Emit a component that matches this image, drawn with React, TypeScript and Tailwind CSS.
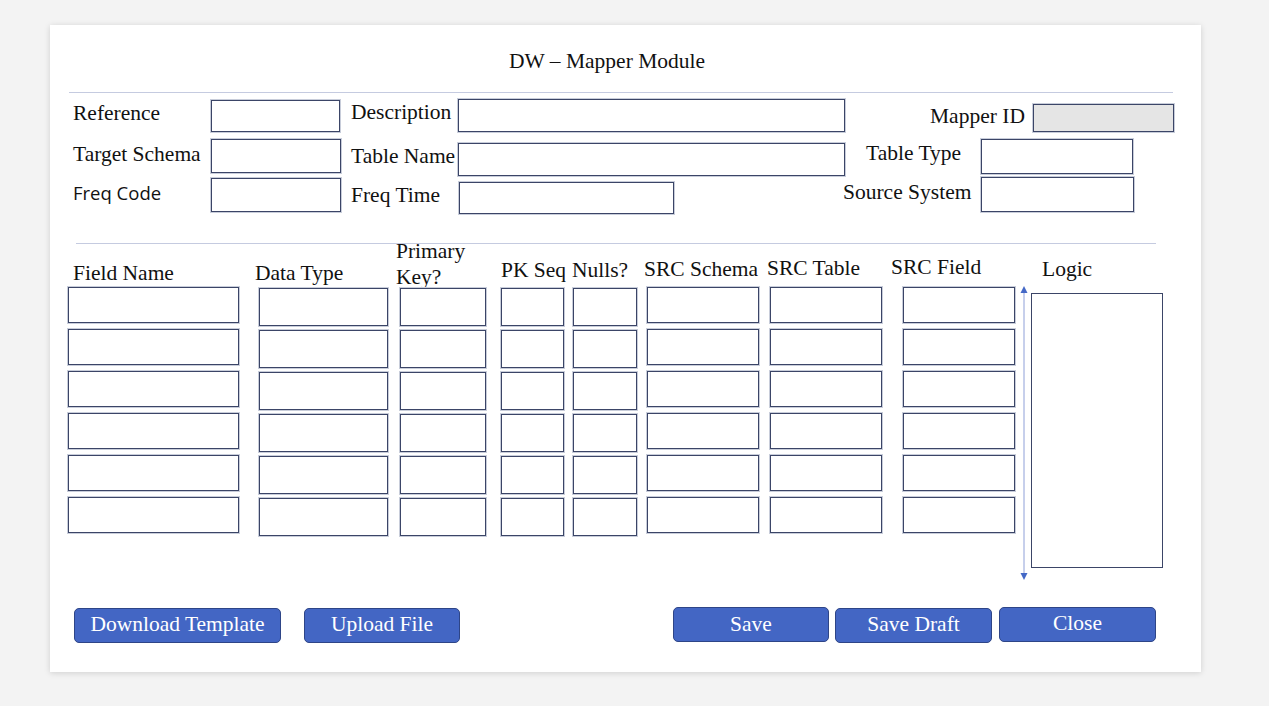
import React from "react";

type Col = {
  label: React.ReactNode;
  wrap: string;
  head: string;
  text: string;
  box: string;
  gap: string;
};

const fieldBox =
  "block bg-white border border-[#3b4567] shadow-[0_0_0_1px_#c8cdda] outline-none";

function Box({ className }: { className: string }) {
  return <input readOnly className={`${fieldBox} ${className}`} />;
}

const cols: Col[] = [
  { label: "Field Name", wrap: "ml-[18px] w-[171px]", head: "h-[43px]", text: "pt-[17px] pl-[5px]", box: "h-[36px]", gap: "gap-[6px]" },
  { label: "Data Type", wrap: "ml-[20px] w-[129px]", head: "h-[44px]", text: "pt-[17px] -ml-[4px]", box: "h-[38px]", gap: "gap-[4px]" },
  {
    label: (
      <>
        Primary
        <br />
        Key?
      </>
    ),
    wrap: "ml-[12px] w-[86px]",
    head: "h-[44px]",
    text: "-mt-[6px] -ml-[4px] leading-[26px]",
    box: "h-[38px]",
    gap: "gap-[4px]",
  },
  { label: "PK Seq", wrap: "ml-[15px] w-[63px]", head: "h-[44px]", text: "pt-[14px]", box: "h-[38px]", gap: "gap-[4px]" },
  { label: "Nulls?", wrap: "ml-[9px] w-[64px]", head: "h-[44px]", text: "pt-[14px] -ml-[1px]", box: "h-[38px]", gap: "gap-[4px]" },
  { label: "SRC Schema", wrap: "ml-[10px] w-[112px]", head: "h-[43px]", text: "pt-[13px] -ml-[3px]", box: "h-[36px]", gap: "gap-[6px]" },
  { label: "SRC Table", wrap: "ml-[11px] w-[112px]", head: "h-[43px]", text: "pt-[12px] -ml-[3px]", box: "h-[36px]", gap: "gap-[6px]" },
  { label: "SRC Field", wrap: "ml-[21px] w-[112px]", head: "h-[43px]", text: "pt-[11px] -ml-[12px]", box: "h-[36px]", gap: "gap-[6px]" },
];

const btn =
  "bg-[#4366c4] border border-[#2e4587] rounded-[5px] text-white text-[21.5px] leading-[24px]";

export default function App() {
  return (
    <div className="min-h-screen bg-[#f3f3f3] pt-[25px] font-['Liberation_Serif',serif] text-[#111]">
      <div className="ml-[50px] w-[1151px] h-[647px] bg-white shadow-[0_1px_6px_rgba(0,0,0,0.15)] flex flex-col">
        {/* title */}
        <div className="pt-[24px] pl-[459px] text-[21.5px] leading-[24px] whitespace-nowrap">
          DW – Mapper Module
        </div>
        <div className="mt-[19px] ml-[19px] w-[1104px] h-px bg-[#c5cbe0]" />

        {/* header fields */}
        <div className="text-[21.5px] leading-[24px] whitespace-nowrap">
          <div className="mt-[6px] h-[33px] pl-[23px] flex items-start">
            <div className="mt-[2px] w-[138px]">Reference</div>
            <Box className="mt-[1px] w-[129px] h-[32px]" />
            <div className="mt-[1px] ml-[11px] w-[107px]">Description</div>
            <Box className="w-[387px] h-[33px]" />
            <div className="mt-[5px] ml-[85px] w-[103px]">Mapper ID</div>
            <Box className="mt-[5px] w-[141px] h-[28px] !bg-[#e5e5e5]" />
          </div>
          <div className="mt-[7px] h-[37px] pl-[23px] flex items-start">
            <div className="mt-[3px] w-[138px]">Target Schema</div>
            <Box className="w-[130px] h-[34px]" />
            <div className="mt-[5px] ml-[10px] w-[107px]">Table Name</div>
            <Box className="mt-[4px] w-[387px] h-[33px]" />
            <div className="mt-[2px] ml-[21px] w-[115px]">Table Type</div>
            <Box className="w-[152px] h-[35px]" />
          </div>
          <div className="mt-[1px] h-[37px] pl-[23px] flex items-start">
            <div className="mt-[4px] w-[138px] font-['Open_Sans',sans-serif] text-[18.5px]">Freq Code</div>
            <Box className="mt-[1px] w-[130px] h-[34px]" />
            <div className="mt-[6px] ml-[10px] w-[108px]">Freq Time</div>
            <Box className="mt-[5px] w-[215px] h-[32px]" />
            <div className="mt-[3px] ml-[169px] w-[138px]">Source System</div>
            <Box className="w-[153px] h-[35px]" />
          </div>
        </div>

        <div className="mt-[29px] ml-[26px] w-[1080px] h-px bg-[#c5cbe0]" />

        {/* mapping grid */}
        <div className="flex items-start text-[21.5px] leading-[24px] whitespace-nowrap">
          {cols.map((c, i) => (
            <div key={i} className={`flex flex-col ${c.wrap}`}>
              <div className={c.head}>
                <div className={c.text}>{c.label}</div>
              </div>
              <div className={`flex flex-col ${c.gap}`}>
                {[0, 1, 2, 3, 4, 5].map((r) => (
                  <Box key={r} className={`w-full ${c.box}`} />
                ))}
              </div>
            </div>
          ))}
          <div className="ml-[4px] pt-[42px]">
            <svg width="10" height="294" viewBox="0 0 10 294">
              <line x1="5" y1="6" x2="5" y2="288" stroke="#8fa0d8" strokeWidth="1" />
              <polygon points="5,0 1.5,7 8.5,7" fill="#4468c6" />
              <polygon points="5,294 1.5,287 8.5,287" fill="#4468c6" />
            </svg>
          </div>
          <div className="ml-[2px] w-[132px] flex flex-col">
            <div className="h-[49px] pt-[13px] pl-[11px]">Logic</div>
            <textarea
              readOnly
              className="block w-[132px] h-[275px] border border-[#3b4567] resize-none outline-none"
            />
          </div>
        </div>

        {/* actions */}
        <div className="mt-[27px] pl-[24px] flex items-start">
          <button className={`${btn} mt-px w-[207px] h-[35px] pb-[3px]`}>Download Template</button>
          <button className={`${btn} mt-px ml-[23px] w-[156px] h-[35px] pb-[3px]`}>Upload File</button>
          <button className={`${btn} ml-[213px] w-[156px] h-[35px] pb-[2px]`}>Save</button>
          <button className={`${btn} mt-px ml-[6px] w-[157px] h-[35px] pb-[3px]`}>Save Draft</button>
          <button className={`${btn} ml-[7px] w-[157px] h-[35px] pb-[4px]`}>Close</button>
        </div>
      </div>
    </div>
  );
}
